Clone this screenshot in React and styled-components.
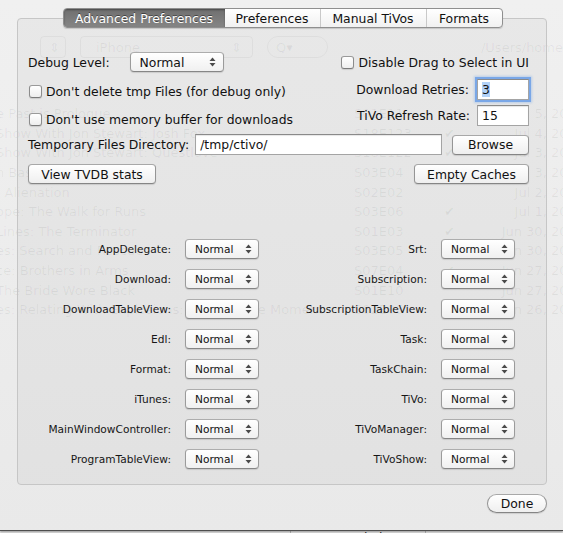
import React from 'react';
import styled, { createGlobalStyle } from 'styled-components';

const Global = createGlobalStyle`
  html, body { margin: 0; padding: 0; background: #ececec; }
  body { font-family: "DejaVu Sans", Verdana, sans-serif; color: #111; }
  * { box-sizing: border-box; }
`;

const Stage = styled.div`
  position: relative;
  width: 563px;
  height: 533px;
  overflow: hidden;
  background: linear-gradient(#f0f0f0, #e9e9e9);
`;

/* ---------- window content underneath the sheet (seen through it) ---------- */
const Backdrop = styled.div`
  display: flex;
  flex-direction: column;
  height: 533px;
  font-size: 13px;
  color: rgba(0, 0, 0, 0.06);
  white-space: nowrap;
`;

const GhostBar = styled.div`
  display: flex;
  align-items: center;
  height: 22px;
  margin-top: 36px;
  padding-left: 40px;
  gap: 14px;
`;

const GhostBox = styled.div`
  width: ${(p) => p.$w}px;
  height: 22px;
  border: 1px solid rgba(0, 0, 0, 0.04);
  border-radius: ${(p) => (p.$round ? 11 : 4)}px;
  display: flex;
  align-items: center;
  justify-content: space-between;
  padding: 0 10px 0 ${(p) => p.$pl || 8}px;
`;

const GhostPath = styled.span`
  margin-left: 139px;
`;

const GhostRows = styled.div`
  display: flex;
  flex-direction: column;
  margin-left: -4px;
  margin-top: 46px;
`;

const GhostRow = styled.div`
  display: grid;
  grid-template-columns: 358px 90px 50px 90px;
  height: 19.6px;
  align-items: center;
`;

const GhostDate = styled.span`
  text-align: right;
`;

const Spacer = styled.div`
  flex: 1;
`;

const BottomHeader = styled.div`
  display: grid;
  grid-template-columns: 290px 135px 1fr;
  height: 4px;
  margin-bottom: -2px;
  background: #e6e6e6;
  color: #222;
  font-size: 12px;
  line-height: 12px;
  overflow: hidden;
`;

const BottomCell = styled.div`
  border-left: ${(p) => (p.$line ? '1px solid #b5b5b5' : 'none')};
  padding-left: 6px;
  padding-top: 1px;
`;

/* ---------------------------------- sheet ---------------------------------- */
const Sheet = styled.div`
  position: absolute;
  left: 0;
  top: 0;
  right: 0;
  height: 531px;
  padding: 8px 16px 0 17px;
  display: flex;
  flex-direction: column;
  border-bottom: 1px solid #4e4e4e;
  box-shadow: 0 1px 2px rgba(0, 0, 0, 0.35);
  font-size: 12.4px;
`;

const TabBar = styled.div`
  align-self: center;
  margin-left: 1px;
  display: flex;
  height: 20px;
  border: 1px solid #8f8f8f;
  border-radius: 4px;
  overflow: hidden;
  position: relative;
  z-index: 1;
  background: linear-gradient(#ffffff, #f1f1f1);
  box-shadow: 0 1px 1px rgba(0, 0, 0, 0.15);
`;

const Tab = styled.div`
  width: ${(p) => p.$w}px;
  display: flex;
  align-items: center;
  justify-content: center;
  font-size: 12.4px;
  color: ${(p) => (p.$active ? '#fff' : '#111')};
  text-shadow: ${(p) => (p.$active ? '0 -1px 0 rgba(0,0,0,0.45)' : 'none')};
  background: ${(p) => (p.$active ? 'linear-gradient(#6f6f6f, #858585)' : 'transparent')};
  box-shadow: ${(p) => (p.$active ? 'inset 0 1px 2px rgba(0,0,0,0.35)' : 'none')};
  border-left: ${(p) => (p.$divider ? '1px solid #c9c9c9' : 'none')};
`;

const TabBox = styled.div`
  margin-top: -10px;
  height: 467px;
  padding: 33px 17px 0 10px;
  display: flex;
  flex-direction: column;
  border: 1px solid #c6c6c6;
  border-radius: 4px;
  background: rgba(0, 0, 0, 0.032);
`;

const TopArea = styled.div`
  display: flex;
  justify-content: space-between;
`;

const Column = styled.div`
  display: flex;
  flex-direction: column;
  align-items: ${(p) => (p.$end ? 'flex-end' : 'flex-start')};
`;

const Row = styled.div`
  display: flex;
  align-items: center;
  height: ${(p) => p.$h || 20}px;
  margin-top: ${(p) => p.$mt || 0}px;
  justify-content: ${(p) => p.$justify || 'flex-start'};
  align-self: stretch;
`;

const Label = styled.span`
  margin-right: ${(p) => p.$mr || 0}px;
`;

const CheckRow = styled.label`
  display: flex;
  align-items: center;
  height: 18px;
  gap: ${(p) => p.$gap || 4}px;
  margin-top: ${(p) => p.$mt || 0}px;
  margin-left: 1px;
`;

const Check = styled.span`
  width: 13px;
  height: 13px;
  border: 1px solid #8c8c8c;
  border-top-color: #9a9a9a;
  border-bottom-color: #7a7a7a;
  border-radius: 3px;
  background: linear-gradient(#ffffff, #eeeeee);
  box-shadow: 0 1px 1px rgba(0, 0, 0, 0.12);
`;

const Popup = styled.div`
  width: ${(p) => p.$w}px;
  height: 20px;
  display: flex;
  align-items: center;
  justify-content: space-between;
  padding: 0 ${(p) => p.$pr}px 0 9px;
  border: 1px solid #9b9b9b;
  border-top-color: #adadad;
  border-bottom-color: #868686;
  border-radius: 4px;
  background: linear-gradient(#ffffff, #f0f0f0);
  box-shadow: 0 1px 1px rgba(0, 0, 0, 0.12);
  font-size: ${(p) => (p.$small ? 10.6 : 12.4)}px;
  color: #111;
`;

const Field = styled.div`
  height: 21px;
  width: ${(p) => (p.$w ? `${p.$w}px` : 'auto')};
  flex: ${(p) => (p.$w ? 'none' : 1)};
  display: flex;
  align-items: center;
  padding-left: 4px;
  background: #fff;
  border: 1px solid #a4a4a4;
  border-top-color: #8a8a8a;
  box-shadow: ${(p) =>
    p.$focus
      ? '0 0 0 2px rgba(110, 160, 230, 0.85), 0 0 2px 3px rgba(130, 175, 235, 0.45)'
      : 'inset 0 1px 1px rgba(0,0,0,0.1)'};
`;

const Selected = styled.span`
  background: #b2d2f8;
`;

const Button = styled.div`
  width: ${(p) => p.$w}px;
  height: ${(p) => p.$h || 20}px;
  margin-left: ${(p) => p.$ml || 0}px;
  display: flex;
  align-items: center;
  justify-content: center;
  border: 1px solid #959595;
  border-top-color: #a8a8a8;
  border-bottom-color: #858585;
  border-radius: ${(p) => (p.$pill ? 10 : 4)}px;
  background: linear-gradient(#ffffff, #efefef);
  box-shadow: 0 1px 1px rgba(0, 0, 0, 0.12);
  color: #111;
`;

const LogGrid = styled.div`
  display: grid;
  grid-template-columns: 143px 74px 154px 74px;
  grid-auto-rows: 20px;
  column-gap: 14px;
  row-gap: 10px;
  margin-top: 55px;
  align-items: center;
`;

const LogLabel = styled.span`
  text-align: right;
  font-size: 10.6px;
  color: #161616;
`;

const Footer = styled.div`
  display: flex;
  justify-content: flex-end;
  margin-top: 9px;
`;

const Arrows = () => (
  <svg width="7" height="10" viewBox="0 0 7 10">
    <path d="M0.5 4 L3.5 0.5 L6.5 4 Z" fill="#4a4a4a" />
    <path d="M0.5 6 L3.5 9.5 L6.5 6 Z" fill="#4a4a4a" />
  </svg>
);

const leftLogs = ['AppDelegate', 'Download', 'DownloadTableView', 'Edl', 'Format', 'iTunes', 'MainWindowController', 'ProgramTableView'];
const rightLogs = ['Srt', 'Subscription', 'SubscriptionTableView', 'Task', 'TaskChain', 'TiVo', 'TiVoManager', 'TiVoShow'];

const ghostRows = [
  ['e Past is Prologue', 'S01E11', '', 'Jul 5, 2012'],
  ['Show With Jon Stewart: Josh Fox', 'S18E123', '✔', 'Jul 4, 2012'],
  ['Show With Jon Stewart: Questlove', 'S18E122', '✔', 'Jul 3, 2012'],
  ['n Basterds', 'S03E04', '', 'Jul 3, 2012'],
  [': Alienation', 'S02E02', '', 'Jul 2, 2012'],
  ['ope: The Walk for Runs', 'S03E06', '✔', 'Jul 1, 2012'],
  ['Lines: The Terminator', 'S01E03', '✔', 'Jun 30, 2012'],
  ['es: Search and Rescue', 'S03E05', '', 'Jun 30, 2012'],
  ['ce: Brothers in Arms', 'S07E04', '✔', 'Jun 27, 2012'],
  ['The Bride Wore Black', 'S01E10', '', 'Jun 27, 2012'],
  ['es: Relating With Explosions: A Teachable Moment', 'S02E06', '', 'Jun 26, 2012'],
];

export default function App() {
  return (
    <>
      <Global />
      <Stage>
        <Backdrop>
          <GhostBar>
            <GhostBox $w={26}>⇕</GhostBox>
            <GhostBox $w={205} $pl={15}>
              <span>iPhone</span>
              <span>⇕</span>
            </GhostBox>
            <GhostBox $w={70} $round>Q▾</GhostBox>
            <GhostPath>/Users/home</GhostPath>
          </GhostBar>
          <GhostRows>
            {ghostRows.map((r, i) => (
              <GhostRow key={i}>
                <span>{r[0]}</span>
                <span>{r[1]}</span>
                <span>{r[2]}</span>
                <GhostDate>{r[3]}</GhostDate>
              </GhostRow>
            ))}
          </GhostRows>
          <Spacer />
          <BottomHeader>
            <BottomCell />
            <BottomCell $line>Last Recorded</BottomCell>
            <BottomCell $line>Format</BottomCell>
          </BottomHeader>
        </Backdrop>

        <Sheet>
          <TabBar>
            <Tab $w={161} $active>Advanced Preferences</Tab>
            <Tab $w={95}>Preferences</Tab>
            <Tab $w={106} $divider>Manual TiVos</Tab>
            <Tab $w={76} $divider>Formats</Tab>
          </TabBar>

          <TabBox>
            <TopArea>
              <Column>
                <Row>
                  <Label $mr={20}>Debug Level:</Label>
                  <Popup $w={94} $pr={7}>
                    <span>Normal</span>
                    <Arrows />
                  </Popup>
                </Row>
                <CheckRow $mt={10}>
                  <Check />
                  <span>Don't delete tmp Files (for debug only)</span>
                </CheckRow>
                <CheckRow $mt={10}>
                  <Check />
                  <span>Don't use memory buffer for downloads</span>
                </CheckRow>
              </Column>
              <Column $end>
                <CheckRow $mt={1} $gap={5}>
                  <Check />
                  <span>Disable Drag to Select in UI</span>
                </CheckRow>
                <Row $h={21} $mt={8} $justify="flex-end">
                  <Label $mr={8}>Download Retries:</Label>
                  <Field $w={52} $focus>
                    <Selected>3</Selected>
                  </Field>
                </Row>
                <Row $h={21} $mt={5} $justify="flex-end">
                  <Label $mr={7}>TiVo Refresh Rate:</Label>
                  <Field $w={52}>15</Field>
                </Row>
              </Column>
            </TopArea>

            <Row $h={21} $mt={6}>
              <Label $mr={6}>Temporary Files Directory:</Label>
              <Field>/tmp/ctivo/</Field>
              <Button $w={77} $ml={10}>Browse</Button>
            </Row>

            <Row $mt={9} $justify="space-between">
              <Button $w={128}>View TVDB stats</Button>
              <Button $w={115}>Empty Caches</Button>
            </Row>

            <LogGrid>
              {leftLogs.map((name, i) => (
                <React.Fragment key={name}>
                  <LogLabel>{name}:</LogLabel>
                  <Popup $w={74} $pr={6} $small>
                    <span>Normal</span>
                    <Arrows />
                  </Popup>
                  <LogLabel>{rightLogs[i]}:</LogLabel>
                  <Popup $w={74} $pr={6} $small>
                    <span>Normal</span>
                    <Arrows />
                  </Popup>
                </React.Fragment>
              ))}
            </LogGrid>
          </TabBox>

          <Footer>
            <Button $w={60} $h={19} $pill>
              Done
            </Button>
          </Footer>
        </Sheet>
      </Stage>
    </>
  );
}
